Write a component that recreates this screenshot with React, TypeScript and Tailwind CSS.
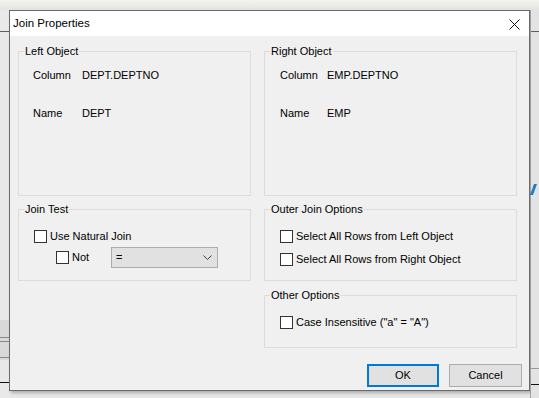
import React from "react";

function Check({ label, className = "" }: { label: string; className?: string }) {
  return (
    <label className={"flex h-[16px] items-center " + className}>
      <span className="h-[13px] w-[13px] shrink-0 border border-[#333333] bg-white" />
      <span className="ml-[3px] whitespace-nowrap">{label}</span>
    </label>
  );
}

function Group({ title, className, children }: { title: string; className: string; children?: React.ReactNode }) {
  return (
    <fieldset className={"border border-[#dcdcdc] " + className}>
      <legend className="ml-[5px] px-[1px] leading-[16px]">{title}</legend>
      {children}
    </fieldset>
  );
}

export default function App() {
  return (
    <div className="flex h-[398px] w-[539px] flex-col overflow-hidden bg-[#e6e6e6] font-['Liberation_Sans',sans-serif] text-[11px] text-black">
      {/* window behind the dialog */}
      <div className="h-[10px] shrink-0 bg-gradient-to-b from-[#f4f4f2] to-[#e4e3dd]" />
      <div className="flex flex-1">
        <div className="flex w-[9px] shrink-0 flex-col bg-[#e9e9e9]">
          <div className="mt-[21px] h-px bg-[#5f5f5f]" />
          <div className="mt-[288px] h-[40px] bg-[#d9d9d9] pt-[17px]">
            <div className="h-px bg-[#8a8a8a]" />
            <div className="mt-[3px] h-px bg-[#8a8a8a]" />
            <div className="mt-[15px] h-px bg-[#8a8a8a]" />
          </div>
          <div className="mt-[22px] h-px bg-[#111111]" />
        </div>

        {/* dialog */}
        <div className="flex h-[381px] w-[521px] shrink-0 flex-col border border-[#6b6b6b] shadow-[2px_2px_3px_rgba(0,0,0,0.25)]">
          <div className="flex h-[25px] shrink-0 items-center justify-between bg-white pl-[3px] pr-[9px]">
            <span className="text-[11.5px]">Join Properties</span>
            <svg width="11" height="11" viewBox="0 0 11 11" className="mt-[1px]">
              <path d="M0.5 0.5 L10.5 10.5 M10.5 0.5 L0.5 10.5" stroke="#111" strokeWidth="1" />
            </svg>
          </div>

          <div className="flex-1 bg-[#f0f0f0] pl-[8px] pt-[7px]">
            <div className="flex gap-[13px]">
              <div className="flex w-[233px] flex-col">
                <Group title="Left Object" className="h-[153px]">
                  <div className="pl-[14px] leading-[16px]">
                    <div className="mt-[8px] flex">
                      <span className="w-[49px]">Column</span>
                      <span>DEPT.DEPTNO</span>
                    </div>
                    <div className="mt-[22px] flex">
                      <span className="w-[49px]">Name</span>
                      <span>DEPT</span>
                    </div>
                  </div>
                </Group>
                <Group title="Join Test" className="mt-[5px] h-[80px]">
                  <div className="pl-[15px] pt-[11px]">
                    <Check label="Use Natural Join" />
                    <div className="mt-[3px] flex items-center">
                      <Check label="Not" className="ml-[22px] w-[55px]" />
                      <div className="flex h-[21px] w-[107px] items-center justify-between border border-[#adadad] bg-[#e1e1e1] pl-[4px] pr-[5px]">
                        <span>=</span>
                        <svg width="9" height="5" viewBox="0 0 9 5">
                          <path d="M0.5 0.5 L4.5 4.5 L8.5 0.5" fill="none" stroke="#404040" strokeWidth="1" />
                        </svg>
                      </div>
                    </div>
                  </div>
                </Group>
              </div>

              <div className="flex w-[253px] flex-col">
                <Group title="Right Object" className="h-[153px]">
                  <div className="pl-[15px] leading-[16px]">
                    <div className="mt-[8px] flex">
                      <span className="w-[47px]">Column</span>
                      <span>EMP.DEPTNO</span>
                    </div>
                    <div className="mt-[22px] flex">
                      <span className="w-[47px]">Name</span>
                      <span>EMP</span>
                    </div>
                  </div>
                </Group>
                <Group title="Outer Join Options" className="mt-[5px] h-[80px]">
                  <div className="pl-[15px] pt-[11px]">
                    <Check label="Select All Rows from Left Object" />
                    <Check label="Select All Rows from Right Object" className="mt-[7px]" />
                  </div>
                </Group>
                <Group title="Other Options" className="mt-[6px] h-[61px]">
                  <div className="pl-[15px] pt-[11px]">
                    <Check label={'Case Insensitive ("a" = "A")'} />
                  </div>
                </Group>
              </div>
            </div>

            <div className="mt-[16px] flex justify-end gap-[10px] pr-[7px]">
              <button className="h-[23px] w-[72px] border-2 border-[#0078d7] bg-[#e1e1e1]">OK</button>
              <button className="h-[23px] w-[73px] border border-[#adadad] bg-[#e1e1e1]">Cancel</button>
            </div>
          </div>
        </div>

        <div className="flex flex-1 flex-col border-l border-[#a0a0a0] bg-[#e3e3e3]">
          <div className="mt-[21px] h-px bg-[#5f5f5f]" />
          <div className="ml-[1px] mt-[152px] h-[11px] w-[3px] -skew-x-[20deg] bg-[#1e7fc0]" />
          <div className="mt-[173px] h-px bg-[#9a9a9a]" />
          <div className="mt-[15px] h-px bg-[#111111]" />
        </div>
      </div>
    </div>
  );
}
